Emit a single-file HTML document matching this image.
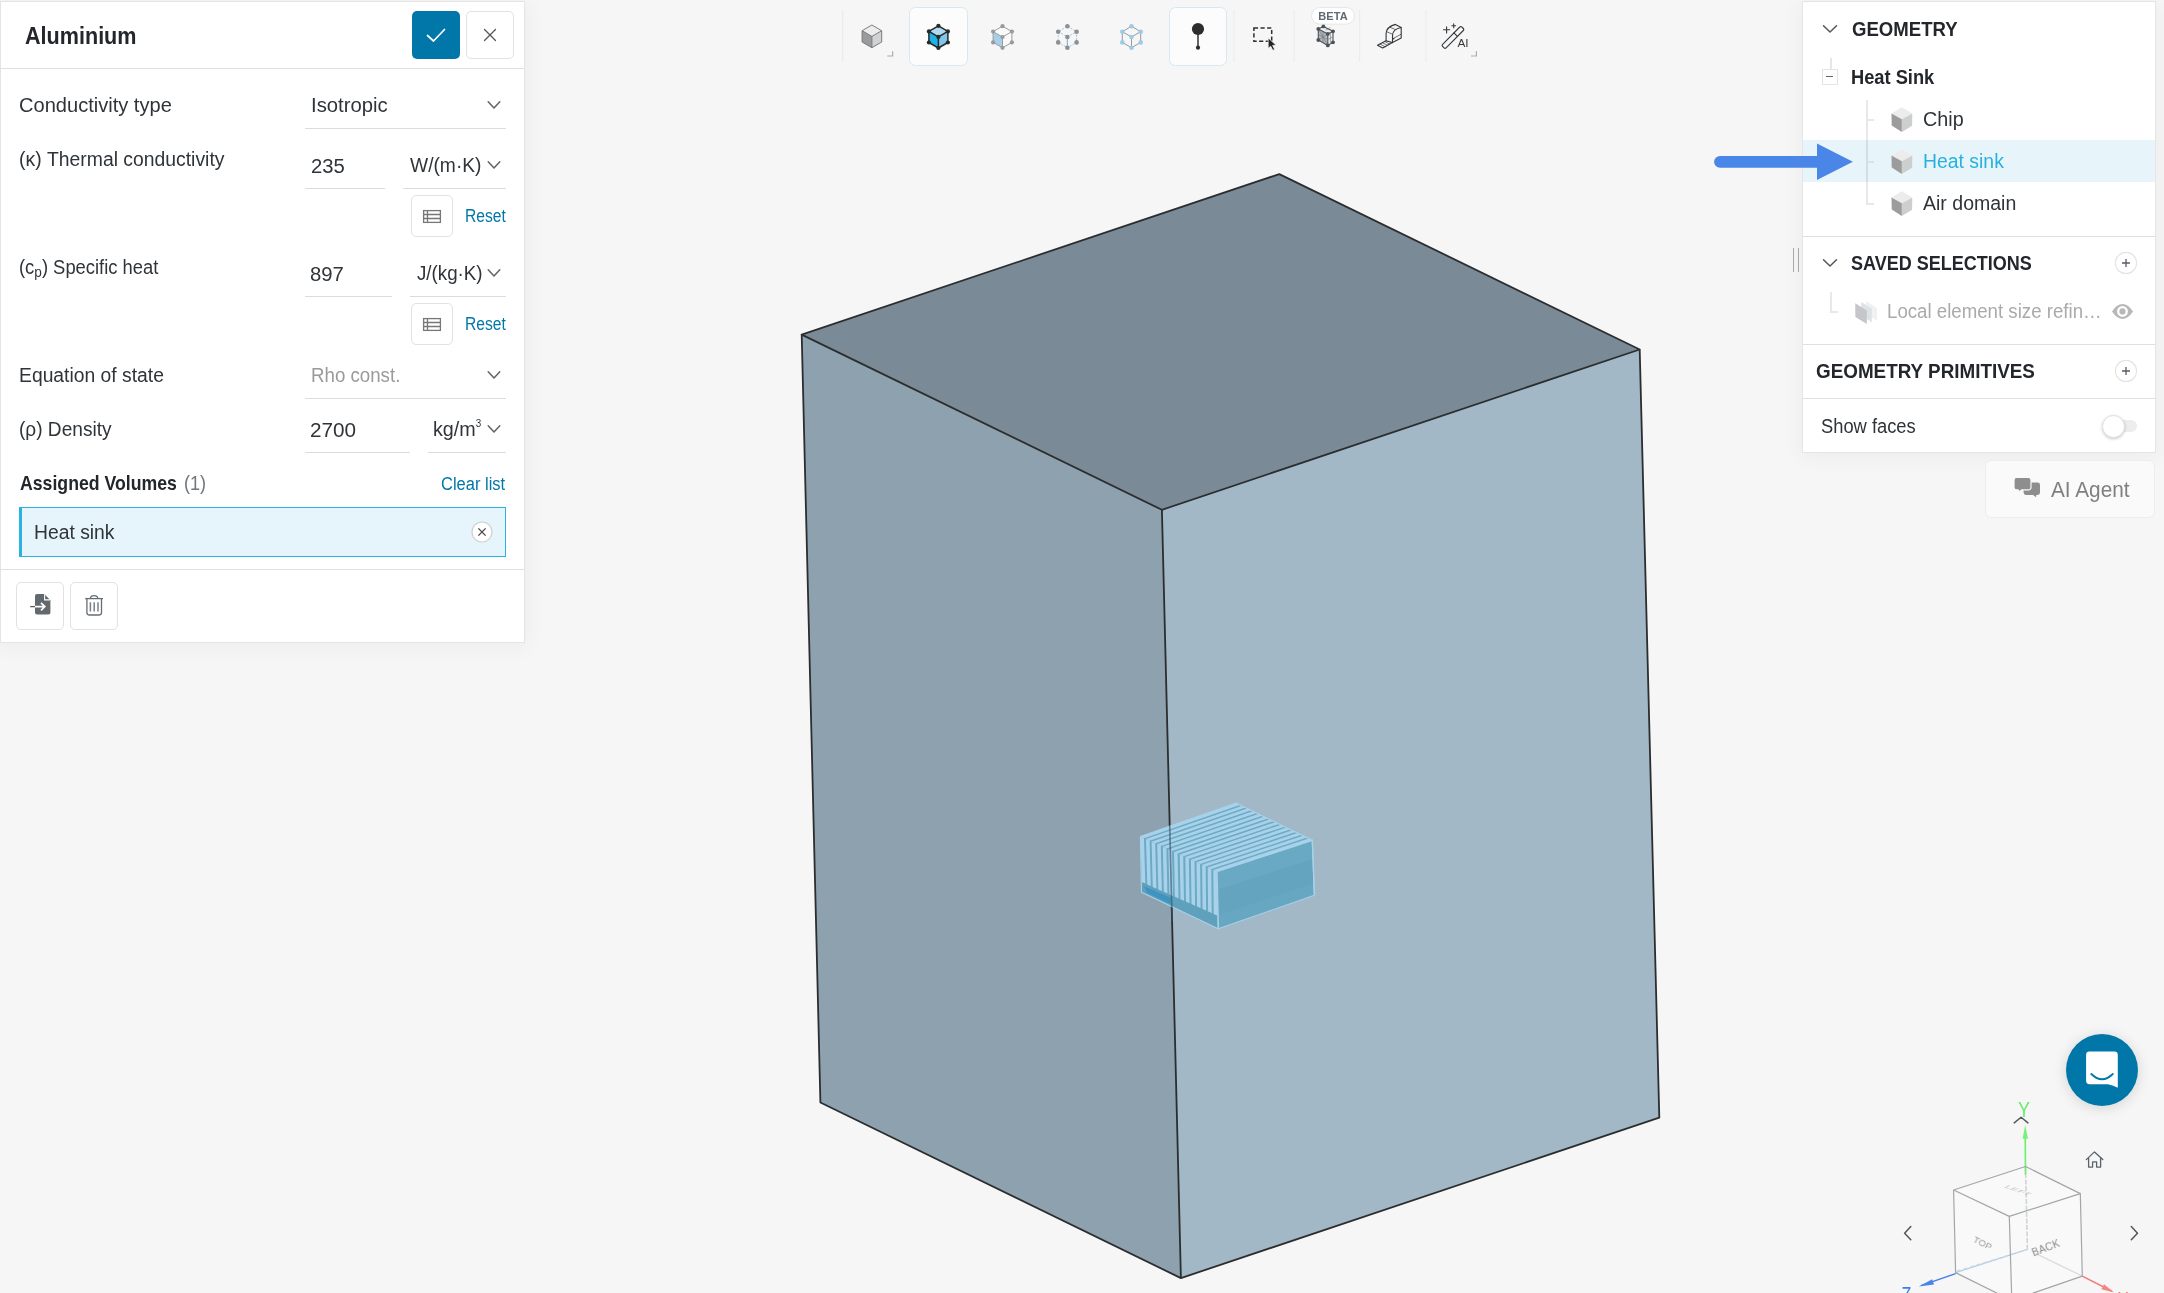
<!DOCTYPE html>
<html lang="en">
<head>
<meta charset="utf-8">
<title>Aluminium</title>
<style>
*{box-sizing:border-box;margin:0;padding:0}
html,body{width:2164px;height:1293px;overflow:hidden;background:#f6f6f6}
body{position:relative;font-family:"Liberation Sans",sans-serif;color:#2e3338;font-size:19px}
.abs{position:absolute}
.t{position:absolute;white-space:nowrap;line-height:1;will-change:opacity;opacity:.999;transform-origin:0 0}
#txt{position:absolute;left:0;top:0;width:0;height:0}
#scene{position:absolute;left:0;top:0;width:2164px;height:1293px}
/* left panel */
#lp{position:absolute;left:0;top:2px;width:524px;height:640px;background:#fff;box-shadow:0 0 0 1px #e4e4e4,0 3px 20px 4px rgba(0,0,0,.04)}
#lp .hdr{position:absolute;left:0;top:0;width:524px;height:67px;border-bottom:1px solid #e0e0e0}
.ul{position:absolute;height:1px;background:#dcdcdc}
.btn{position:absolute;background:#fff;border:1px solid #e2e2e2;border-radius:5px}
.blue{color:#0077a8}
/* right panel */
#rp{position:absolute;left:1803px;top:2px;width:352px;height:450px;background:#fff;box-shadow:0 0 0 1px #e5e5e5,0 3px 20px 4px rgba(0,0,0,.04)}
.hr{position:absolute;left:0;width:352px;height:1px;background:#e0e0e0}
.b{font-weight:bold}
svg text{opacity:.999;will-change:opacity}
</style>
</head>
<body>
<svg id="scene" viewBox="0 0 2164 1293">
  <!-- big box -->
  <polygon points="1279.3,174.1 801.7,334.6 1161.9,509.8 1639.7,349.5" fill="#7a8b97"/>
  <polygon points="801.7,334.6 1161.9,509.8 1180.9,1278.1 820.4,1102.5" fill="#8ea1af"/>
  <polygon points="1161.9,509.8 1639.7,349.5 1659.3,1117.7 1180.9,1278.1" fill="#a2b8c6"/>
  <g fill="none" stroke="#2b2d2f" stroke-width="1.8" stroke-linejoin="round">
    <polygon points="1279.3,174.1 801.7,334.6 1161.9,509.8 1639.7,349.5"/>
    <polyline points="801.7,334.6 820.4,1102.5 1180.9,1278.1 1659.3,1117.7 1639.7,349.5"/>
    <line x1="1161.9" y1="509.8" x2="1180.9" y2="1278.1"/>
  </g>
<g id="heatsink">
<polygon points="1236.1,803.1 1140.4,836.5 1216.9,871.6 1312.3,840.3" fill="#6eabc7"/>
<polygon points="1140.4,836.5 1216.9,871.6 1218.3,928.7 1141.5,892.2" fill="#6ca9c5"/>
<polygon points="1216.9,871.6 1312.3,840.3 1314.4,895.3 1218.3,928.7" fill="#64a4bf"/>
<polygon points="1141.8,882.0 1217.2,915.5 1218.3,928.7 1141.5,892.2" fill="#5fa1bd"/>
<polygon points="1144.3,886.2 1170.3,897.4 1170.3,903.9 1146.6,892.5" fill="#2f8fc2" opacity=".7"/>
<polygon points="1217.2,915.5 1313.9,883.4 1314.4,895.3 1218.3,928.7" fill="#67a7c2"/>
<polygon points="1216.9,871.6 1312.3,840.3 1313.0,859.1 1217.3,889.7" fill="#6fadc8" opacity=".55"/>
<polygon points="1140.4,836.5 1144.0,838.2 1239.7,804.9 1236.1,803.1" fill="#a8d2ea"/>
<polygon points="1140.4,836.5 1144.0,838.2 1145.3,883.6 1141.8,882.0" fill="#a8d2ea"/>
<polygon points="1146.0,839.1 1149.6,840.8 1245.3,807.6 1241.7,805.9" fill="#a8d2ea"/>
<polygon points="1146.0,839.1 1149.6,840.8 1150.8,886.1 1147.3,884.5" fill="#a8d2ea"/>
<polygon points="1151.6,841.7 1155.2,843.3 1250.9,810.3 1247.3,808.6" fill="#a8d2ea"/>
<polygon points="1151.6,841.7 1155.2,843.3 1156.4,888.5 1152.8,886.9" fill="#a8d2ea"/>
<polygon points="1157.2,844.2 1160.8,845.9 1256.4,813.0 1252.9,811.3" fill="#a8d2ea"/>
<polygon points="1157.2,844.2 1160.8,845.9 1161.9,891.0 1158.3,889.4" fill="#a8d2ea"/>
<polygon points="1162.8,846.8 1166.4,848.5 1262.0,815.8 1258.5,814.0" fill="#a8d2ea"/>
<polygon points="1162.8,846.8 1166.4,848.5 1167.4,893.4 1163.9,891.8" fill="#a8d2ea"/>
<polygon points="1168.4,849.4 1172.0,851.0 1267.6,818.5 1264.0,816.8" fill="#a8d2ea"/>
<polygon points="1168.4,849.4 1172.0,851.0 1173.0,895.9 1169.4,894.3" fill="#a8d2ea"/>
<polygon points="1174.0,852.0 1177.6,853.6 1273.2,821.2 1269.6,819.5" fill="#a8d2ea"/>
<polygon points="1174.0,852.0 1177.6,853.6 1178.5,898.3 1174.9,896.7" fill="#a8d2ea"/>
<polygon points="1179.7,854.5 1183.2,856.2 1278.8,823.9 1275.2,822.2" fill="#a8d2ea"/>
<polygon points="1179.7,854.5 1183.2,856.2 1184.0,900.8 1180.5,899.2" fill="#a8d2ea"/>
<polygon points="1185.3,857.1 1188.9,858.8 1284.4,826.7 1280.8,824.9" fill="#a8d2ea"/>
<polygon points="1185.3,857.1 1188.9,858.8 1189.5,903.2 1186.0,901.6" fill="#a8d2ea"/>
<polygon points="1190.9,859.7 1194.5,861.3 1289.9,829.4 1286.4,827.6" fill="#a8d2ea"/>
<polygon points="1190.9,859.7 1194.5,861.3 1195.1,905.7 1191.5,904.1" fill="#a8d2ea"/>
<polygon points="1196.5,862.2 1200.1,863.9 1295.5,832.1 1291.9,830.4" fill="#a8d2ea"/>
<polygon points="1196.5,862.2 1200.1,863.9 1200.6,908.1 1197.1,906.5" fill="#a8d2ea"/>
<polygon points="1202.1,864.8 1205.7,866.5 1301.1,834.8 1297.5,833.1" fill="#a8d2ea"/>
<polygon points="1202.1,864.8 1205.7,866.5 1206.1,910.6 1202.6,909.0" fill="#a8d2ea"/>
<polygon points="1207.7,867.4 1211.3,869.0 1306.7,837.6 1303.1,835.8" fill="#a8d2ea"/>
<polygon points="1207.7,867.4 1211.3,869.0 1211.7,913.0 1208.1,911.4" fill="#a8d2ea"/>
<polygon points="1213.3,870.0 1216.9,871.6 1312.3,840.3 1308.7,838.5" fill="#a8d2ea"/>
<polygon points="1213.3,870.0 1216.9,871.6 1217.2,915.5 1213.7,913.9" fill="#a8d2ea"/>
<polyline points="1216.9,871.6 1312.3,840.3 1314.4,895.3" fill="none" stroke="#a8d2ea" stroke-width="1.4"/>
<polygon points="1236.1,803.1 1140.4,836.5 1141.5,892.2 1218.3,928.7 1314.4,895.3 1312.3,840.3" fill="none" stroke="#a8d2ea" stroke-width="1.1" stroke-linejoin="round"/>
<line x1="1216.9" y1="871.6" x2="1218.3" y2="928.7" stroke="#a8d2ea" stroke-width="1.6"/>
</g>
<line x1="1169.7" y1="825.5" x2="1172.1" y2="921.5" stroke="#2f4f63" stroke-width="1.7" opacity=".6"/>
<g id="orient">
<polygon points="2025.5,1166.5 2080.3,1193.6 2082.3,1276.1 2011.8,1300.5 1955.6,1272.6 1953.6,1190.0" fill="#fafafa" opacity=".8"/>
<line x1="2025.5" y1="1166.5" x2="2027.4" y2="1249.4" stroke="#cfd4d6" stroke-width="1.6" stroke-dasharray="5 1.5"/>
<line x1="2027.4" y1="1249.4" x2="1955.6" y2="1272.6" stroke="#a9cdea" stroke-width="1.2"/>
<line x1="2027.4" y1="1249.4" x2="1955.6" y2="1271.4" stroke="#d5d9db" stroke-width="1.2" stroke-dasharray="4 3"/>
<line x1="2035.4" y1="1253.4" x2="2082.3" y2="1276.1" stroke="#dcdcdc" stroke-width="1.4"/>
<line x1="2025.2" y1="1132" x2="2025.5" y2="1174.5" stroke="#6cf06c" stroke-width="1.6"/>
<polygon points="2025.2,1125 2022.6,1138.8 2028,1138.8" fill="#7af07a"/>
<g fill="none" stroke="#a3a6a8" stroke-width="1.2" stroke-linejoin="round"><polygon points="2025.5,1166.5 2080.3,1193.6 2009.3,1216.4 1953.6,1190.0"/><polyline points="1953.6,1190.0 1955.6,1272.6 2011.8,1300.5 2082.3,1276.1 2080.3,1193.6"/><line x1="2009.3" y1="1216.4" x2="2011.8" y2="1300.5"/></g>
<text transform="matrix(.93 .33 -.55 .3 2003.5 1187.5)" font-family="Liberation Sans, sans-serif" font-size="10.5" fill="#c2c2c2" letter-spacing=".3">LEFT</text>
<text transform="translate(1972.5 1241.5) rotate(27)" font-family="Liberation Sans, sans-serif" font-size="9.6" fill="#9a9a9a">TOP</text>
<text transform="translate(2033.5 1256.5) rotate(-21)" font-family="Liberation Sans, sans-serif" font-size="10.4" fill="#8a8a8a" letter-spacing=".2">BACK</text>
<text x="2023.9" y="1116.6" text-anchor="middle" font-family="Liberation Sans, sans-serif" font-size="22.5" fill="#68ec68" textLength="12" lengthAdjust="spacingAndGlyphs">Y</text>
<polyline points="2014.2,1122.9 2021.1,1117.2 2028,1122.9" fill="none" stroke="#50575c" stroke-width="1.4" stroke-linecap="round" stroke-linejoin="round"/>
<polyline points="1910.8,1226.6 1904.6,1233.2 1910.8,1239.8" fill="none" stroke="#50575c" stroke-width="1.5" stroke-linecap="round" stroke-linejoin="round"/>
<polyline points="2131.3,1226.6 2137.5,1233.2 2131.3,1239.8" fill="none" stroke="#50575c" stroke-width="1.5" stroke-linecap="round" stroke-linejoin="round"/>
<path d="M2086.3 1159.6 L2094.5 1151.9 L2102.8 1159.6 M2088.6 1158 V1167.1 H2092.6 V1161.8 H2096.6 V1167.1 H2100.6 V1158" fill="none" stroke="#5a6268" stroke-width="1.3" stroke-linejoin="round" stroke-linecap="round"/>
<line x1="1955.6" y1="1273.6" x2="1921" y2="1285.6" stroke="#3f7fe8" stroke-width="1.5"/>
<polygon points="1918.8,1286.4 1932.2,1279.2 1934,1284.6" fill="#4a86ea"/>
<text x="1901.6" y="1301.6" font-family="Liberation Sans, sans-serif" font-size="22.5" fill="#3f7fe8" textLength="9.8" lengthAdjust="spacingAndGlyphs">Z</text>
<line x1="2082.3" y1="1276.1" x2="2112" y2="1291.3" stroke="#f57a7a" stroke-width="1.6"/>
<polygon points="2114,1292.4 2101.3,1289.3 2104,1284.2" fill="#f68686"/>
<text x="2117.6" y="1306.6" font-family="Liberation Sans, sans-serif" font-size="22.5" fill="#f57a7a" textLength="11.2" lengthAdjust="spacingAndGlyphs">X</text>
</g>
</svg>

<svg class="abs" style="left:830px;top:0" width="660" height="75" viewBox="830 0 660 75">
<line x1="842.6" y1="10" x2="842.6" y2="62" stroke="#ebebeb" stroke-width="1"/>
<line x1="1233.9" y1="10" x2="1233.9" y2="62" stroke="#ebebeb" stroke-width="1"/>
<line x1="1294.1" y1="10" x2="1294.1" y2="62" stroke="#ebebeb" stroke-width="1"/>
<line x1="1359.6" y1="10" x2="1359.6" y2="62" stroke="#ebebeb" stroke-width="1"/>
<line x1="1426" y1="10" x2="1426" y2="62" stroke="#ebebeb" stroke-width="1"/>
<rect x="909.5" y="7.5" width="58" height="58" rx="6" fill="#fcfcfc" stroke="#d6e9f2"/>
<rect x="1169.5" y="7.5" width="57" height="58" rx="6" fill="#fcfcfc" stroke="#d6e9f2"/>
<polygon points="871.9,25.0 881.7,30.7 871.9,36.4 862.1,30.7" fill="#ececec"/>
<polygon points="862.1,30.7 871.9,36.4 871.9,47.7 862.1,42.0" fill="#9b9b9b"/>
<polygon points="871.9,36.4 881.7,30.7 881.7,42.0 871.9,47.7" fill="#d2d2d2"/>
<g fill="none" stroke="#69737a" stroke-width=".9" stroke-linejoin="round"><polygon points="871.9,25.0 881.7,30.7 881.7,42.0 871.9,47.7 862.1,42.0 862.1,30.7"/><polyline points="862.1,30.7 871.9,36.4 881.7,30.7"/><line x1="871.9" y1="36.4" x2="871.9" y2="47.7"/></g>
<path d="M887.2 56H892.6V51.2" fill="none" stroke="#adadad" stroke-width="1.2"/>
<polygon points="938.4,25.8 947.9,31.4 938.4,36.9 928.9,31.4" fill="#b0daf0"/>
<polygon points="928.9,31.4 938.4,36.9 938.4,48.0 928.9,42.5" fill="#1fb1e6"/>
<polygon points="938.4,36.9 947.9,31.4 947.9,42.5 938.4,48.0" fill="#7fc6e8"/>
<g fill="none" stroke="#26282a" stroke-width="1.5" stroke-linejoin="round"><polygon points="938.4,25.8 947.9,31.4 947.9,42.5 938.4,48.0 928.9,42.5 928.9,31.4"/><polyline points="928.9,31.4 938.4,36.9 947.9,31.4"/><line x1="938.4" y1="36.9" x2="938.4" y2="48.0"/></g>
<circle cx="938.4" cy="25.8" r="2.1" fill="#26282a"/><circle cx="928.9" cy="31.4" r="2.1" fill="#26282a"/><circle cx="947.9" cy="31.4" r="2.1" fill="#26282a"/><circle cx="938.4" cy="36.9" r="2.1" fill="#26282a"/><circle cx="928.9" cy="42.5" r="2.1" fill="#26282a"/><circle cx="947.9" cy="42.5" r="2.1" fill="#26282a"/><circle cx="938.4" cy="48.0" r="2.1" fill="#26282a"/>
<polygon points="1002.5,26.2 1011.9,31.6 1011.9,42.4 1002.5,47.8 993.1,42.4 993.1,31.6" fill="#fafafa"/>
<polygon points="993.1,31.6 1002.5,37.0 1002.5,47.8 993.1,42.4" fill="#a6cfe9"/>
<g fill="none" stroke="#9c9c9c" stroke-width="1" stroke-linejoin="round"><polygon points="1002.5,26.2 1011.9,31.6 1011.9,42.4 1002.5,47.8 993.1,42.4 993.1,31.6"/><polyline points="993.1,31.6 1002.5,37.0 1011.9,31.6"/><line x1="1002.5" y1="37.0" x2="1002.5" y2="47.8"/></g>
<circle cx="1002.5" cy="26.2" r="2.1" fill="#9a9a9a"/><circle cx="993.1" cy="31.6" r="2.1" fill="#9a9a9a"/><circle cx="1011.9" cy="31.6" r="2.1" fill="#9a9a9a"/><circle cx="1002.5" cy="37.0" r="2.1" fill="#9a9a9a"/><circle cx="993.1" cy="42.4" r="2.1" fill="#9a9a9a"/><circle cx="1011.9" cy="42.4" r="2.1" fill="#9a9a9a"/><circle cx="1002.5" cy="47.8" r="2.1" fill="#9a9a9a"/>
<g fill="none" stroke="#93c6e6" stroke-width=".9" stroke-dasharray="2.2 1.2" stroke-linejoin="round"><polygon points="1067.4,26.3 1076.6,31.7 1076.6,42.4 1067.4,47.7 1058.2,42.4 1058.2,31.7"/><polyline points="1058.2,31.7 1067.4,37.0 1076.6,31.7"/><line x1="1067.4" y1="37.0" x2="1067.4" y2="47.7"/></g>
<line x1="1067.4" y1="37.2" x2="1067.4" y2="47.7" stroke="#7fbce3" stroke-width="1.1"/>
<circle cx="1067.4" cy="26.3" r="2.3" fill="#8f8f8f"/><circle cx="1058.2" cy="31.7" r="2.3" fill="#8f8f8f"/><circle cx="1076.6" cy="31.7" r="2.3" fill="#8f8f8f"/><circle cx="1067.4" cy="37.0" r="2.3" fill="#8f8f8f"/><circle cx="1058.2" cy="42.4" r="2.3" fill="#8f8f8f"/><circle cx="1076.6" cy="42.4" r="2.3" fill="#8f8f8f"/><circle cx="1067.4" cy="47.7" r="2.3" fill="#8f8f8f"/>
<g fill="none" stroke="#999" stroke-width="1" stroke-linejoin="round"><polygon points="1131.5,26.3 1140.7,31.7 1140.7,42.4 1131.5,47.7 1122.3,42.4 1122.3,31.7"/><polyline points="1122.3,31.7 1131.5,37.0 1140.7,31.7"/><line x1="1131.5" y1="37.0" x2="1131.5" y2="47.7"/></g>
<circle cx="1131.5" cy="26.3" r="2.3" fill="#9ccbe8"/><circle cx="1122.3" cy="31.7" r="2.3" fill="#9ccbe8"/><circle cx="1140.7" cy="31.7" r="2.3" fill="#9ccbe8"/><circle cx="1131.5" cy="37.0" r="2.3" fill="#9ccbe8"/><circle cx="1122.3" cy="42.4" r="2.3" fill="#9ccbe8"/><circle cx="1140.7" cy="42.4" r="2.3" fill="#9ccbe8"/><circle cx="1131.5" cy="47.7" r="2.3" fill="#9ccbe8"/>
<line x1="1198" y1="30" x2="1198" y2="47" stroke="#555" stroke-width="1.8"/><circle cx="1198" cy="29" r="6.1" fill="#2c2d2f"/><circle cx="1198" cy="47.7" r="2.1" fill="#2c2d2f"/>
<rect x="1253.9" y="27.9" width="17.8" height="13.4" fill="none" stroke="#2e3033" stroke-width="1.5" stroke-dasharray="4.2 2.4"/>
<path d="M1268.2 37.9 L1268.2 48.3 L1270.7 46.2 L1272.8 50.3 L1274.6 49.4 L1272.6 45.4 L1275.9 45.1 Z" fill="#222" stroke="#f6f6f6" stroke-width=".7"/>
<rect x="1311.5" y="7.5" width="43" height="16.6" rx="8.3" fill="#fff" stroke="#e6e6e6"/>
<text x="1333" y="20" text-anchor="middle" font-family="Liberation Sans, sans-serif" font-weight="bold" font-size="11" fill="#5f6a72" letter-spacing=".1">BETA</text>
<polygon points="1318.3,28.9 1327.8,33.9 1327.8,45.4 1318.3,40.0" fill="#b4b7ba"/>
<polygon points="1327.8,33.9 1333.0,31.3 1333.0,42.3 1327.8,45.4" fill="#ededed"/>
<polygon points="1318.3,28.9 1323.4,26.4 1333.0,31.3 1327.8,33.9" fill="#ededed"/>
<g fill="none" stroke="#4a525a" stroke-width="1.1" stroke-linejoin="round"><polygon points="1318.3,28.9 1323.4,26.4 1333.0,31.3 1333.0,42.3 1327.8,45.4 1318.3,40.0"/><polyline points="1318.3,28.9 1327.8,33.9 1333.0,31.3"/><line x1="1327.8" y1="33.9" x2="1327.8" y2="45.4"/></g>
<g fill="none" stroke="#6d747a" stroke-width=".6"><path d="M1318.3 34.5L1327.8 39.6L1333 36.8M1323 31.4V42.7M1318.3 28.9L1327.8 45.4M1318.3 40L1327.8 33.9M1330.4 32.6V43.9M1325.6 30.2L1330.4 27.6"/></g>
<circle cx="1318.3" cy="28.9" r="1.9" fill="#4a525a"/><circle cx="1323.4" cy="26.4" r="1.9" fill="#4a525a"/><circle cx="1333" cy="31.3" r="1.9" fill="#4a525a"/><circle cx="1327.8" cy="33.9" r="1.9" fill="#4a525a"/><circle cx="1318.3" cy="40" r="1.9" fill="#4a525a"/><circle cx="1333" cy="42.3" r="1.9" fill="#4a525a"/><circle cx="1327.8" cy="45.4" r="1.9" fill="#4a525a"/>
<g fill="none" stroke="#35383b" stroke-width="1.1" stroke-linejoin="round" stroke-linecap="round">
<path d="M1386.1 40.8 V33.5 Q1386.3 27 1395.4 24.4 L1401.2 27.5 V37.9 L1392.5 42.6"/>
<path d="M1392.5 42.6 V35.2 Q1392.8 29.2 1401.2 27.5"/>
<path d="M1386.3 31.5 L1392.7 34.3 M1389.5 27.1 L1395.6 29.6 M1392.8 38.7 L1401.2 34.2" stroke-width=".7"/>
<path d="M1386.1 40.8 L1377.5 45.2 L1382.7 48 L1392.5 42.6 Z"/>
<path d="M1380 44 L1385 46.7 M1382.5 42.7 L1387.5 45.4 M1385 41.5 L1389.5 44.1" stroke-width=".7"/>
</g><circle cx="1393.7" cy="38.8" r=".8" fill="#35383b"/>
<g fill="none" stroke="#35383b" stroke-width="1.1" stroke-linecap="round" stroke-linejoin="round">
<path d="M1442.6 44.3 L1459.8 27 Q1460.8 26 1461.8 27 L1463.3 28.5 Q1464.3 29.5 1463.3 30.5 L1446.1 47.8 Q1445.1 48.8 1444.1 47.8 L1442.6 46.3 Q1441.6 45.3 1442.6 44.3Z"/>
<path d="M1453.9 32.9 L1457.4 36.4"/>
<path d="M1443.5 29.8H1449.7M1446.6 26.7V32.9M1451.8 25.8H1455.6M1453.7 23.9V27.7"/>
</g>
<text x="1457.4" y="46.8" font-family="Liberation Sans, sans-serif" font-size="11.8" fill="#35383b">AI</text>
<path d="M1471 56H1476.4V51.2" fill="none" stroke="#adadad" stroke-width="1.2"/>
</svg>
<div id="lp">
  <div class="hdr"></div>
  <div class="abs" style="left:0;top:0;width:1px;height:640px;background:#e4e4e4"></div>
  <div class="abs" style="left:412px;top:9px;width:48px;height:48px;background:#0077a8;border-radius:5px">
    <svg width="48" height="48" viewBox="0 0 48 48"><polyline points="15.5,24.5 21.5,30 32.5,18.5" fill="none" stroke="#fff" stroke-width="1.7" stroke-linecap="round" stroke-linejoin="round"/></svg>
  </div>
  <div class="btn" style="left:466px;top:9px;width:48px;height:48px">
    <svg width="46" height="46" viewBox="0 0 46 46"><path d="M17.5 17.5 L28.5 28.5 M28.5 17.5 L17.5 28.5" fill="none" stroke="#555" stroke-width="1.3" stroke-linecap="round"/></svg>
  </div>

  <!-- Conductivity type -->
  <svg class="abs chev" style="left:487px;top:98px" width="14" height="10" viewBox="0 0 14 10"><polyline points="1.2,1.8 7,7.9 12.8,1.8" fill="none" stroke="#636363" stroke-width="1.5" stroke-linecap="round" stroke-linejoin="round"/></svg>
  <div class="ul" style="left:305px;top:126px;width:201px"></div>

  <!-- Thermal conductivity -->
  <div class="ul" style="left:305px;top:186px;width:80px"></div>
  <svg class="abs chev" style="left:487px;top:158px" width="14" height="10" viewBox="0 0 14 10"><polyline points="1.2,1.8 7,7.9 12.8,1.8" fill="none" stroke="#636363" stroke-width="1.5" stroke-linecap="round" stroke-linejoin="round"/></svg>
  <div class="ul" style="left:403px;top:186px;width:103px"></div>
  <div class="btn" style="left:411px;top:193px;width:42px;height:42px">
    <svg width="40" height="40" viewBox="0 0 40 40"><g fill="none" stroke="#777" stroke-width="1.3"><rect x="11.6" y="14.6" width="16.8" height="11.8"/><path d="M11.6 18.5H28.4M11.6 22.5H28.4M15.5 14.6V26.4"/></g></svg>
  </div>

  <!-- Specific heat -->
  <div class="ul" style="left:305px;top:294px;width:87px"></div>
  <svg class="abs chev" style="left:487px;top:266px" width="14" height="10" viewBox="0 0 14 10"><polyline points="1.2,1.8 7,7.9 12.8,1.8" fill="none" stroke="#636363" stroke-width="1.5" stroke-linecap="round" stroke-linejoin="round"/></svg>
  <div class="ul" style="left:410px;top:294px;width:96px"></div>
  <div class="btn" style="left:411px;top:301px;width:42px;height:42px">
    <svg width="40" height="40" viewBox="0 0 40 40"><g fill="none" stroke="#777" stroke-width="1.3"><rect x="11.6" y="14.6" width="16.8" height="11.8"/><path d="M11.6 18.5H28.4M11.6 22.5H28.4M15.5 14.6V26.4"/></g></svg>
  </div>

  <!-- Equation of state -->
  <svg class="abs chev" style="left:487px;top:368px" width="14" height="10" viewBox="0 0 14 10"><polyline points="1.2,1.8 7,7.9 12.8,1.8" fill="none" stroke="#636363" stroke-width="1.5" stroke-linecap="round" stroke-linejoin="round"/></svg>
  <div class="ul" style="left:305px;top:396px;width:201px"></div>

  <!-- Density -->
  <div class="ul" style="left:305px;top:450px;width:105px"></div>
  <svg class="abs chev" style="left:487px;top:422px" width="14" height="10" viewBox="0 0 14 10"><polyline points="1.2,1.8 7,7.9 12.8,1.8" fill="none" stroke="#636363" stroke-width="1.5" stroke-linecap="round" stroke-linejoin="round"/></svg>
  <div class="ul" style="left:428px;top:450px;width:78px"></div>

  <!-- Assigned volumes -->
  <div class="abs" style="left:19px;top:505px;width:487px;height:50px;background:#e6f4fb;border:1px solid #2ab3e0;border-left-width:3px"></div>
  <svg class="abs" style="left:470px;top:518px" width="24" height="24" viewBox="0 0 24 24"><circle cx="12" cy="12" r="10" fill="#fff" stroke="#cfcfcf" stroke-width="1.2"/><path d="M8.4 8.4L15.6 15.6M15.6 8.4L8.4 15.6" stroke="#444" stroke-width="1.3" fill="none"/></svg>
  <div class="abs" style="left:0;top:567px;width:524px;height:1px;background:#e0e0e0"></div>
  <div class="btn" style="left:16px;top:580px;width:48px;height:48px"></div>
  <div class="btn" style="left:70px;top:580px;width:48px;height:48px"></div>
  <svg class="abs" style="left:16px;top:580px" width="102" height="48" viewBox="16 582 102 48">
    <!-- import doc -->
    <path d="M37 594.1 H44.3 L50.4 600.2 V612.6 a2 2 0 0 1 -2 2 H37 a2 2 0 0 1 -2 -2 V596.1 a2 2 0 0 1 2 -2 Z" fill="#626a70"/>
    <path d="M44.6 594.3 V599.9 H50.2" fill="none" stroke="#fff" stroke-width="1.1"/>
    <path d="M30.2 606.6 H35" stroke="#555c61" stroke-width="1.3" fill="none"/>
    <path d="M35 606.6 H44.6 M41 602.9 L44.8 606.6 L41 610.3" stroke="#fff" stroke-width="1.7" fill="none"/>
    <!-- trash -->
    <g fill="none" stroke="#666e74" stroke-width="1.3">
      <path d="M85.2 598.6 H103"/>
      <path d="M90.4 598.4 Q90.6 595.6 94.1 595.6 Q97.6 595.6 97.8 598.4"/>
      <path d="M86.9 598.8 V612.5 Q86.9 615 89.6 615 H98.8 Q101.5 615 101.5 612.5 V598.8"/>
      <path d="M90.4 602.2 V611.6 M94.2 602.2 V611.6 M98 602.2 V611.6" stroke-width="1.5" stroke="#7a8186"/>
    </g>
  </svg>
</div>

<div id="rp">
  <!-- GEOMETRY -->
  <svg class="abs" style="left:19px;top:22px" width="16" height="10" viewBox="0 0 16 10"><polyline points="1.5,1.8 8,8 14.5,1.8" fill="none" stroke="#555" stroke-width="1.5" stroke-linecap="round" stroke-linejoin="round"/></svg>
  <!-- Heat Sink -->
  <div class="abs" style="left:27px;top:56px;width:2px;height:11px;background:#e6e6e6"></div>
  <div class="abs" style="left:19px;top:67px;width:16px;height:16px;border:1px solid #e3e3e3;background:#fff"></div>
  <div class="abs" style="left:23px;top:74px;width:7px;height:1.3px;background:#5a6670"></div>
  <!-- selected row -->
  <div class="abs" style="left:0;top:138px;width:352px;height:42px;background:#e7f5fb"></div>
  <!-- tree lines -->
  <div class="abs" style="left:63px;top:98px;width:2px;height:104.5px;background:rgba(0,0,0,.09)"></div>
  <div class="abs" style="left:65px;top:117px;width:6px;height:2px;background:rgba(0,0,0,.09)"></div>
  <div class="abs" style="left:65px;top:159px;width:6px;height:2px;background:rgba(0,0,0,.07)"></div>
  <div class="abs" style="left:65px;top:200.5px;width:6px;height:2px;background:rgba(0,0,0,.09)"></div>
  <svg class="abs" style="left:88px;top:105px" width="22" height="26" viewBox="0 0 22 26"><polygon points="10.9,.3 21.3,6.5 10.9,12.3 .5,6.5" fill="#ececec"/><polygon points=".5,6.5 10.9,12.3 10.9,25 .7,18.5" fill="#9c9c9c"/><polygon points="10.9,12.3 21.3,6.5 21.1,18.8 10.9,25" fill="#cdcfcf"/></svg>
  <svg class="abs" style="left:88px;top:147px" width="22" height="26" viewBox="0 0 22 26"><polygon points="10.9,.3 21.3,6.5 10.9,12.3 .5,6.5" fill="#ececec"/><polygon points=".5,6.5 10.9,12.3 10.9,25 .7,18.5" fill="#9c9c9c"/><polygon points="10.9,12.3 21.3,6.5 21.1,18.8 10.9,25" fill="#cdcfcf"/></svg>
  <svg class="abs" style="left:88px;top:189px" width="22" height="26" viewBox="0 0 22 26"><polygon points="10.9,.3 21.3,6.5 10.9,12.3 .5,6.5" fill="#ececec"/><polygon points=".5,6.5 10.9,12.3 10.9,25 .7,18.5" fill="#9c9c9c"/><polygon points="10.9,12.3 21.3,6.5 21.1,18.8 10.9,25" fill="#cdcfcf"/></svg>
  <div class="hr" style="top:234px"></div>
  <!-- SAVED SELECTIONS -->
  <svg class="abs" style="left:19px;top:256px" width="16" height="10" viewBox="0 0 16 10"><polyline points="1.5,1.8 8,8 14.5,1.8" fill="none" stroke="#555" stroke-width="1.5" stroke-linecap="round" stroke-linejoin="round"/></svg>
  <svg class="abs" style="left:311px;top:248.8px" width="24" height="24" viewBox="0 0 24 24"><circle cx="12" cy="12" r="10.6" fill="#fff" stroke="#e4e4e4" stroke-width="1.1"/><path d="M8 12H16M12 8V16" stroke="#555e66" stroke-width="1.3" fill="none"/></svg>
  <div class="abs" style="left:27px;top:290px;width:2px;height:20.5px;background:#e8e8e8"></div>
  <div class="abs" style="left:27px;top:309px;width:8px;height:1.5px;background:#e8e8e8"></div>
  <svg class="abs" style="left:51px;top:298px" width="25" height="25" viewBox="1854 300 25 25">
    <polygon points="1866.2,301 1877,308 1877,320.8 1866.2,314" fill="#f1f1f1"/>
    <polygon points="1861.2,302 1871.8,308.6 1871.8,322.3 1861.2,315.5" fill="#dde3e5"/>
    <polygon points="1855.2,303.2 1866.8,310.5 1866.8,323.9 1855.4,316.9" fill="#c4c6c7"/>
  </svg>
  <svg class="abs" style="left:308px;top:300px" width="23" height="18" viewBox="2111 302 23 18">
    <path d="M2112 311.4 Q2117 304 2122.5 304 Q2128 304 2133 311.4 Q2128 318.9 2122.5 318.9 Q2117 318.9 2112 311.4Z" fill="#b8b8b8"/>
    <circle cx="2122.5" cy="311.4" r="5.4" fill="#fff"/><circle cx="2122.5" cy="311.4" r="3.1" fill="#b8b8b8"/>
  </svg>
  <div class="hr" style="top:342px"></div>
  <!-- GEOMETRY PRIMITIVES -->
  <svg class="abs" style="left:311px;top:356.8px" width="24" height="24" viewBox="0 0 24 24"><circle cx="12" cy="12" r="10.6" fill="#fff" stroke="#e4e4e4" stroke-width="1.1"/><path d="M8 12H16M12 8V16" stroke="#555e66" stroke-width="1.3" fill="none"/></svg>
  <div class="hr" style="top:396px"></div>
  <div class="abs" style="left:301px;top:418px;width:33px;height:12px;border-radius:6px;background:#ededed"></div>
  <div class="abs" style="left:298.5px;top:412.5px;width:23px;height:23px;border-radius:50%;background:#fff;border:1px solid #e0e0e0;box-shadow:0 1px 3px rgba(0,0,0,.2)"></div>
</div>

<!-- arrow -->
<svg class="abs" style="left:1705px;top:135px" width="155" height="52" viewBox="1705 135 155 52">
  <path d="M1720 155.9 H1817 V143.6 L1852.9 161.85 L1817 180.1 V167.8 H1720 a5.95 5.95 0 0 1 0 -11.9Z" fill="#4a86e8"/>
</svg>
<!-- drag handle -->
<div class="abs" style="left:1793px;top:248px;width:1px;height:24px;background:#a8a8a8"></div>
<div class="abs" style="left:1798px;top:248px;width:1px;height:24px;background:#a8a8a8"></div>

<!-- chat -->
<div class="abs" style="left:2066px;top:1034px;width:72px;height:72px;border-radius:50%;background:#0077a8;box-shadow:0 2px 14px rgba(0,0,0,.14)"></div>
<svg class="abs" style="left:2080px;top:1046px" width="44" height="48" viewBox="2080 1046 44 48">
  <path d="M2089.5 1051.6 H2114.4 Q2117.8 1051.6 2117.8 1055 V1087.7 Q2113.5 1085.3 2108 1084.2 H2089.5 Q2086.1 1084.2 2086.1 1080.8 V1055 Q2086.1 1051.6 2089.5 1051.6Z" fill="#fff"/>
  <path d="M2091.3 1074 Q2102 1084.6 2112.8 1074" fill="none" stroke="#0077a8" stroke-width="1.8" stroke-linecap="round"/>
</svg>
<!-- AI Agent -->
<div class="abs" style="left:1985px;top:460px;width:170px;height:58px;background:#fafafa;border:1px solid #ededed;border-radius:6px"></div>
<svg class="abs" style="left:2012px;top:475px" width="30" height="24" viewBox="2012 475 30 24">
  <path d="M2026 482.6 h11.6 a2.4 2.4 0 0 1 2.4 2.4 v7.6 a2.4 2.4 0 0 1 -2.4 2.4 h-1.4 v2.3 l-3.2 -2.3 h-7 a2.4 2.4 0 0 1 -2.4 -2.4 v-7.6 a2.4 2.4 0 0 1 2.4 -2.4z" fill="#8e8e8e"/>
  <path d="M2016.4 477.5 h12.2 a2.4 2.4 0 0 1 2.4 2.4 v7.6 a2.4 2.4 0 0 1 -2.4 2.4 h-6.8 l-3.6 2.4 v-2.4 h-1.8 a2.4 2.4 0 0 1 -2.4 -2.4 v-7.6 a2.4 2.4 0 0 1 2.4 -2.4z" fill="#8e8e8e" stroke="#fafafa" stroke-width="1.2"/>
</svg>

<div id="txt">
<!--TXT-->
<div class="t" style="left:24.90px;top:25.00px;font-size:23.5px;font-weight:bold;color:#23272b;transform:scaleX(0.9183)">Aluminium</div>
<div class="t" style="left:18.70px;top:95.00px;font-size:20px;color:#2f3439;transform:scaleX(1.0033)">Conductivity type</div>
<div class="t" style="left:310.99px;top:95.00px;font-size:20px;color:#2f3439;transform:scaleX(1.0149)">Isotropic</div>
<div class="t" style="left:19.03px;top:149.00px;font-size:20px;color:#2f3439;transform:scaleX(0.9679)">(κ) Thermal conductivity</div>
<div class="t" style="left:310.69px;top:156.00px;font-size:20px;color:#2f3439;transform:scaleX(1.0125)">235</div>
<div class="t" style="left:410.10px;top:155.00px;font-size:20px;color:#2f3439;transform:scaleX(0.9608)">W/(m·K)</div>
<div class="t" style="left:464.93px;top:207.00px;font-size:18px;color:#0077a8;transform:scaleX(0.8696)">Reset</div>
<div class="t" style="left:18.98px;top:257.00px;font-size:20px;color:#2f3439;transform:scaleX(0.9192)">(c<span style="font-size:.74em;position:relative;top:.2em">p</span>) Specific heat</div>
<div class="t" style="left:310.48px;top:264.00px;font-size:20px;color:#2f3439;transform:scaleX(1.0156)">897</div>
<div class="t" style="left:416.60px;top:263.00px;font-size:20px;color:#2f3439;transform:scaleX(0.9362)">J/(kg·K)</div>
<div class="t" style="left:464.93px;top:315.00px;font-size:18px;color:#0077a8;transform:scaleX(0.8696)">Reset</div>
<div class="t" style="left:18.73px;top:365.00px;font-size:20px;color:#2f3439;transform:scaleX(0.9658)">Equation of state</div>
<div class="t" style="left:311.07px;top:365.00px;font-size:20px;color:#9a9a9a;transform:scaleX(0.9344)">Rho const.</div>
<div class="t" style="left:18.95px;top:419.00px;font-size:20px;color:#2f3439;transform:scaleX(0.9542)">(ρ) Density</div>
<div class="t" style="left:310.47px;top:420.00px;font-size:20px;color:#2f3439;transform:scaleX(1.0349)">2700</div>
<div class="t" style="left:432.91px;top:419.00px;font-size:20px;color:#2f3439;transform:scaleX(0.9854)">kg/m<span style="font-size:.5em;position:relative;top:-.9em">3</span></div>
<div class="t" style="left:19.70px;top:473.00px;font-size:20.5px;font-weight:bold;color:#23272b;transform:scaleX(0.8621)">Assigned Volumes</div>
<div class="t" style="left:183.60px;top:473.00px;font-size:20px;color:#70777d;transform:scaleX(0.9043)">(1)</div>
<div class="t" style="left:441.48px;top:475.00px;font-size:18px;color:#0077a8;transform:scaleX(0.9159)">Clear list</div>
<div class="t" style="left:33.83px;top:522.00px;font-size:20px;color:#2f3439;transform:scaleX(0.9659)">Heat sink</div>
<div class="t" style="left:1851.70px;top:19.00px;font-size:20.5px;font-weight:bold;color:#23272b;transform:scaleX(0.9060)">GEOMETRY</div>
<div class="t" style="left:1851.31px;top:67.00px;font-size:20.5px;font-weight:bold;color:#23272b;transform:scaleX(0.8914)">Heat Sink</div>
<div class="t" style="left:1922.61px;top:109.00px;font-size:20px;color:#2f3439;transform:scaleX(0.9875)">Chip</div>
<div class="t" style="left:1922.63px;top:151.00px;font-size:20px;color:#27b1de;transform:scaleX(0.9695)">Heat sink</div>
<div class="t" style="left:1923.40px;top:193.00px;font-size:20px;color:#2f3439;transform:scaleX(0.9758)">Air domain</div>
<div class="t" style="left:1851.20px;top:253.00px;font-size:20.5px;font-weight:bold;color:#23272b;transform:scaleX(0.8785)">SAVED SELECTIONS</div>
<div class="t" style="left:1886.77px;top:301.00px;font-size:20px;color:#aaaaaa;transform:scaleX(0.9330)">Local element size refin…</div>
<div class="t" style="left:1815.60px;top:361.00px;font-size:20.5px;font-weight:bold;color:#23272b;transform:scaleX(0.9197)">GEOMETRY PRIMITIVES</div>
<div class="t" style="left:1820.88px;top:416.00px;font-size:20px;color:#2f3439;transform:scaleX(0.9157)">Show faces</div>
<div class="t" style="left:2051.20px;top:480.00px;font-size:21.5px;color:#808080;transform:scaleX(0.9659)">AI Agent</div>
<!--/TXT-->
</div>
</body>
</html>
